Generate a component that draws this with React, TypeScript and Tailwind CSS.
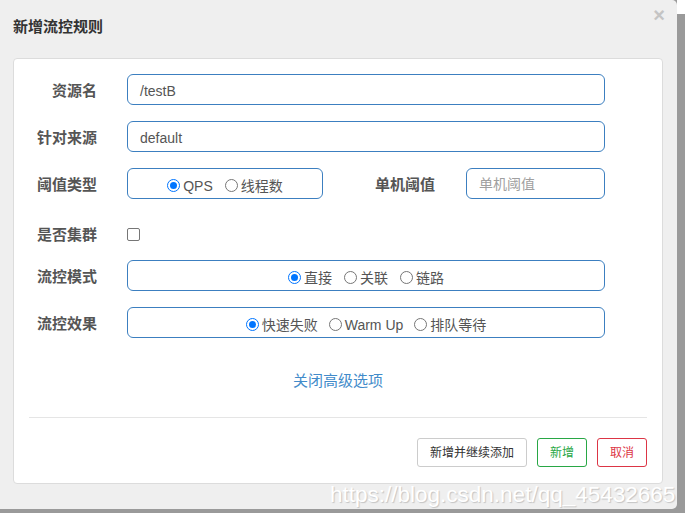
import React from 'react';

const font = "font-['Liberation_Sans','Noto_Sans_CJK_SC',sans-serif]";

// 单选按钮（Chrome 默认样式）
const Radio: React.FC<{ checked?: boolean; label: string }> = ({ checked, label }) => (
  <span className="flex items-center gap-[3px] pt-[3px]">
    {checked ? (
      <span className="w-[13px] h-[13px] rounded-full border border-[#0075ff] bg-white flex items-center justify-center">
        <span className="w-[7px] h-[7px] rounded-full bg-[#0075ff]" />
      </span>
    ) : (
      <span className="w-[13px] h-[13px] rounded-full border border-[#767676] bg-white" />
    )}
    <span className="text-[14px] text-[#555] leading-none pt-[1px]">{label}</span>
  </span>
);

const Label: React.FC<{ text: string; w?: string }> = ({ text, w = 'w-[83px]' }) => (
  <div className={`${w} shrink-0 text-right text-[15px] font-bold text-[#555] pt-[4px]`}>{text}</div>
);

export default function App() {
  return (
    <div className={`${font} w-[685px] h-[513px] bg-[#9a9a9a] flex overflow-hidden`}>
      {/* 弹窗主体 */}
      <div className="relative w-[677px] h-[509px] bg-[#efefef] rounded-r-[5px] shrink-0">
        {/* 标题栏 */}
        <div className="h-[52px] flex justify-between pl-[13px] pr-[12px]">
          <div className="self-center pt-[2px] text-[15px] font-bold text-[#333]">新增流控规则</div>
          <div className="mt-[5px] text-[20px] font-bold text-[#c4c4c4] leading-none">×</div>
        </div>

        {/* 表单卡片 */}
        <div className="ml-[13px] mt-[6px] w-[650px] h-[426px] bg-white border border-[#dcdcdc] rounded-[4px] pt-[15px]">
          <div className="flex items-center h-[31px]">
            <Label text="资源名" />
            <div className="ml-[30px] w-[478px] h-[31px] border border-[#3c7fc0] rounded-[6px] flex items-center px-[12px] pt-[3px] text-[14px] text-[#555]">
              /testB
            </div>
          </div>

          <div className="flex items-center h-[31px] mt-[16px]">
            <Label text="针对来源" />
            <div className="ml-[30px] w-[478px] h-[31px] border border-[#3c7fc0] rounded-[6px] flex items-center px-[12px] pt-[3px] text-[14px] text-[#555]">
              default
            </div>
          </div>

          <div className="flex items-center h-[31px] mt-[16px]">
            <Label text="阈值类型" />
            <div className="ml-[30px] w-[196px] h-[31px] border border-[#3c7fc0] rounded-[6px] flex items-center justify-center gap-[12px]">
              <Radio checked label="QPS" />
              <Radio label="线程数" />
            </div>
            <Label text="单机阈值" w="w-[112px]" />
            <div className="ml-[31px] w-[139px] h-[31px] border border-[#3c7fc0] rounded-[6px] flex items-center px-[12px] pt-[2px] text-[14px] text-[#a0a0a0]">
              单机阈值
            </div>
          </div>

          <div className="flex items-center h-[36px] mt-[16px]">
            <Label text="是否集群" />
            <span className="ml-[30px] mt-[2px] w-[13px] h-[13px] border border-[#767676] rounded-[2px] bg-white" />
          </div>

          <div className="flex items-center h-[31px] mt-[9px]">
            <Label text="流控模式" />
            <div className="ml-[30px] w-[478px] h-[31px] border border-[#3c7fc0] rounded-[6px] flex items-center justify-center gap-[12px]">
              <Radio checked label="直接" />
              <Radio label="关联" />
              <Radio label="链路" />
            </div>
          </div>

          <div className="flex items-center h-[31px] mt-[16px]">
            <Label text="流控效果" />
            <div className="ml-[30px] w-[478px] h-[31px] border border-[#3c7fc0] rounded-[6px] flex items-center justify-center gap-[11px]">
              <Radio checked label="快速失败" />
              <Radio label="Warm Up" />
              <Radio label="排队等待" />
            </div>
          </div>

          <div className="mt-[30px] h-[24px] flex items-center justify-center pt-[2px] text-[15px] text-[#428bca]">
            关闭高级选项
          </div>

          <div className="mx-[15px] mt-[25px] h-px bg-[#e5e5e5]" />

          <div className="mx-[15px] mt-[20px] flex justify-end gap-[10px]">
            <button className="w-[110px] h-[29px] border border-[#ccc] rounded-[3px] pt-[1px] text-[12px] text-[#333] bg-white">
              新增并继续添加
            </button>
            <button className="w-[50px] h-[29px] border border-[#28a745] rounded-[3px] pt-[1px] text-[12px] text-[#28a745] bg-white">
              新增
            </button>
            <button className="w-[50px] h-[29px] border border-[#dc3545] rounded-[3px] pt-[1px] text-[12px] text-[#dc3545] bg-white">
              取消
            </button>
          </div>
        </div>

        {/* 水印 */}
        <div className="absolute left-[330px] top-[481px] text-[22.5px] leading-[28px] text-white whitespace-nowrap [text-shadow:1px_1px_1px_#c4c4c4]">
          https://blog.csdn.net/qq_45432665
        </div>
      </div>

      <div className="flex-1 flex flex-col">
        <div className="h-[14px] bg-white" />
        <div className="flex-1 bg-[#9a9a9a]" />
      </div>
    </div>
  );
}
